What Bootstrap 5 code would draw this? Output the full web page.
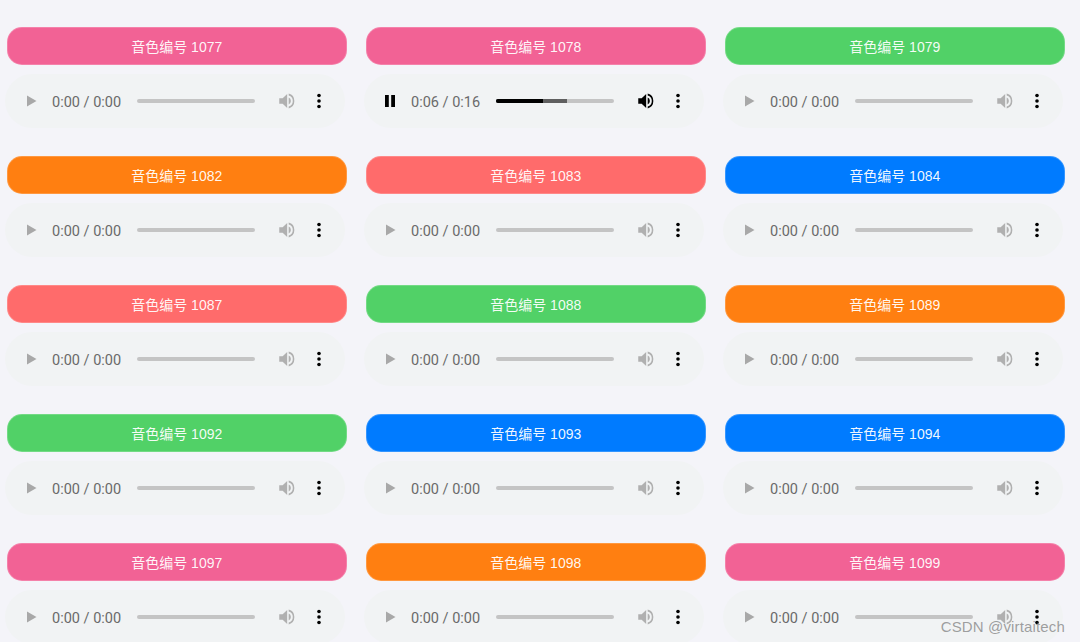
<!DOCTYPE html>
<html lang="zh">
<head>
  <meta charset="UTF-8">
  <title>音色编号</title>
  <link href="https://cdn.jsdelivr.net/npm/bootstrap@5.3.0/dist/css/bootstrap.min.css" rel="stylesheet">
  <style>
    html, body {
      height: 642px;
      overflow: hidden;
    }
    body {
      background-color: #f4f4f9;
    }
    .voice-grid {
      grid-template-columns: repeat(3, 339.5px);
      column-gap: 19.5px;
      row-gap: 28px;
      padding: 27px 0 0 7px;
    }
    .voice-btn {
      height: 38px;
      padding-bottom: 1px;
      border-radius: 15px;
      border: 1px solid rgba(255, 255, 255, .2);
      color: rgba(255, 255, 255, .94);
      font: 14px "Liberation Sans", "Noto Sans CJK SC", sans-serif;
    }
    .c-pink { background-color: #f26295; }
    .c-orange { background-color: #ff7f11; }
    .c-red { background-color: #ff6b6b; }
    .c-green { background-color: #51d167; }
    .c-blue { background-color: #007bff; }
    .player {
      width: 340px;
      height: 54px;
      margin: 9px 0 0 -2px;
      padding: 0 20px;
      border-radius: 27px;
      background-color: #f1f3f4;
      color: #6a6a6a;
      font: 14.5px Roboto, sans-serif;
    }
    .player svg {
      flex: none;
      display: block;
    }
    .ico-play { width: 14px; height: 14px; margin-right: 13px; fill: #a8a8a8; }
    .ico-pause { width: 14px; height: 14px; margin-right: 13px; fill: #000; }
    .play-time { width: 85px; padding-top: 2px; white-space: nowrap; }
    .track {
      width: 118px;
      height: 4px;
      border-radius: 2px;
      background-color: #c4c4c4;
      overflow: hidden;
    }
    .track-buffer { height: 100%; background-color: #5f5f5f; }
    .track-done { height: 100%; background-color: #000; }
    .ico-vol { width: 18px; height: 18px; margin-left: 22px; fill: #b0b0b0; }
    .ico-vol.on { fill: #000; }
    .ico-more { width: 6px; height: 16px; margin-left: 21px; fill: #000; }
    .watermark {
      position: absolute;
      right: 15px;
      bottom: 7px;
      color: rgba(120, 120, 120, .7);
      font: 15px "Liberation Sans", sans-serif;
      letter-spacing: .15px;
    }
  </style>
</head>
<body>
<svg width="0" height="0" class="position-absolute">
  <symbol id="s-play" viewBox="0 0 14 14"><path d="M2 1.500v11l9.500-5.500z"/></symbol>
  <symbol id="s-pause" viewBox="0 0 14 14"><path d="M1 1h3.800v12H1zM7.200 1H11v12H7.200z"/></symbol>
  <symbol id="s-vol" viewBox="0 0 20 20"><path d="M2.500 7v6h3.800l5 4.800V2.200l-5 4.800z"/><path d="M13 6.200v7.600a4.200 4.200 0 0 0 0-7.600z"/><path d="M13 1.800v2a6.500 6.500 0 0 1 0 12.400v2a8.500 8.500 0 0 0 0-16.400z"/></symbol>
  <symbol id="s-more" viewBox="0 0 6 16"><circle cx="3" cy="2.500" r="1.800"/><circle cx="3" cy="8" r="1.800"/><circle cx="3" cy="13.500" r="1.800"/></symbol>
</svg>

<div id="voices" class="d-grid voice-grid"></div>
<div class="watermark">CSDN @virtaitech</div>

<script src="https://cdn.jsdelivr.net/npm/bootstrap@5.3.0/dist/js/bootstrap.bundle.min.js"></script>
<script>
  // id, colour
  const voices = [
    [1077, 'pink'], [1078, 'pink'], [1079, 'green'],
    [1082, 'orange'], [1083, 'red'], [1084, 'blue'],
    [1087, 'red'], [1088, 'green'], [1089, 'orange'],
    [1092, 'green'], [1093, 'blue'], [1094, 'blue'],
    [1097, 'pink'], [1098, 'orange'], [1099, 'pink']
  ];

  function playerHtml(active) {
    const track = active
      ? '<div class="track-buffer" style="width:60%"><div class="track-done" style="width:66%"></div></div>'
      : '';
    return `<div class="player d-flex align-items-center">
      <svg class="${active ? 'ico-pause' : 'ico-play'}"><use href="#${active ? 's-pause' : 's-play'}"/></svg>
      <span class="play-time">${active ? '0:06 / 0:16' : '0:00 / 0:00'}</span>
      <div class="track">${track}</div>
      <svg class="ico-vol${active ? ' on' : ''}"><use href="#s-vol"/></svg>
      <svg class="ico-more"><use href="#s-more"/></svg>
    </div>`;
  }

  document.getElementById('voices').innerHTML = voices.map(([id, colour]) => `
    <div>
      <div class="voice-btn c-${colour} d-flex align-items-center justify-content-center">音色编号 ${id}</div>
      ${playerHtml(id === 1078)}
    </div>`).join('');
</script>
</body>
</html>
